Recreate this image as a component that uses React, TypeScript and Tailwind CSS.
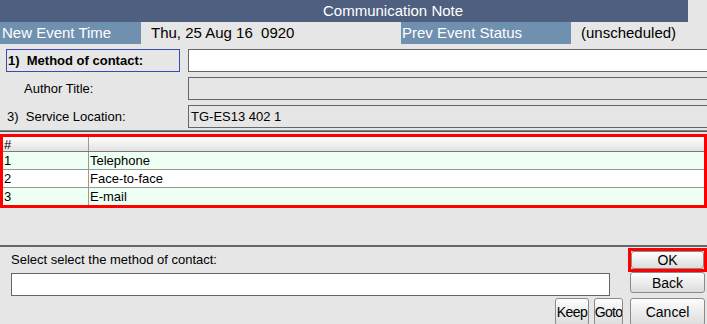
const rows = [
  { n: '1', label: 'Telephone' },
  { n: '2', label: 'Face-to-face' },
  { n: '3', label: 'E-mail' },
];

function Btn({ label, className = '' }: { label: string; className?: string }) {
  return (
    <button
      className={`flex items-center justify-center overflow-hidden rounded-[3px] border border-[#8a8a8a] bg-gradient-to-b from-[#fdfdfd] to-[#dcdcdc] px-0 leading-none whitespace-nowrap text-black ${className}`}
    >
      {label}
    </button>
  );
}

export default function App() {
  return (
    <div className="flex h-[324px] w-[707px] flex-col overflow-hidden bg-[#e6e6e6] font-['Liberation_Sans',Arial,sans-serif] text-black">
      {/* title */}
      <div className="flex h-[22px] shrink-0">
        <div className="flex w-[688px] items-center bg-[#4f5f80] pl-[323px] text-[15px] text-white">
          Communication Note
        </div>
      </div>

      {/* event info */}
      <div className="flex h-[22px] shrink-0 items-center text-[15px] whitespace-pre">
        <div className="flex h-full w-[141px] items-center bg-[#7090b0] pl-[2px] text-white">New Event Time</div>
        <div className="w-[260px] pl-[10px]">Thu, 25 Aug 16  0920</div>
        <div className="flex h-full w-[170px] items-center bg-[#7090b0] pl-[1px] text-white">Prev Event Status</div>
        <div className="pl-[10px]">(unscheduled)</div>
      </div>

      {/* form */}
      <div className="flex shrink-0 flex-col gap-[5px] pt-[5px] text-[13px]">
        <div className="flex h-[23px]">
          <div className="ml-[6px] flex w-[174px] items-center border border-[#3a4ab0] pl-[1px] font-bold whitespace-pre">
            1)  Method of contact:
          </div>
          <div className="ml-[8px] flex-1 border border-r-0 border-[#666] bg-white" />
        </div>
        <div className="flex h-[23px]">
          <div className="flex w-[188px] items-center pl-[24px]">Author Title:</div>
          <div className="flex-1 border border-r-0 border-[#666] bg-[#e6e6e6]" />
        </div>
        <div className="flex h-[23px]">
          <div className="flex w-[188px] items-center pl-[7px] whitespace-pre">3)  Service Location:</div>
          <div className="flex flex-1 items-center border border-r-0 border-[#666] bg-[#e6e6e6] pl-[2px]">
            TG-ES13 402 1
          </div>
        </div>
      </div>

      <div className="mt-[2px] h-[2px] shrink-0 border-t border-[#888] border-b border-b-[#555]" />

      {/* list */}
      <div className="mt-[2px] shrink-0 border-[3px] border-[#ff0000] text-[13px]">
        <div className="flex h-[15px] border-b border-[#7a7a7a] bg-gradient-to-b from-[#ffffff] to-[#e2e2e2] leading-[15px]">
          <div className="w-[86px] border-r border-[#999] pl-[1px]">#</div>
          <div className="flex-1" />
        </div>
        {rows.map((r, i) => (
          <div
            key={r.n}
            className={`flex items-center ${i < rows.length - 1 ? 'h-[18px] border-b border-[#999]' : 'h-[17px]'} ${
              i % 2 === 0 ? 'bg-[#eefff3]' : 'bg-white'
            }`}
          >
            <div className="flex h-full w-[86px] items-center border-r border-[#999] pl-[1px]">{r.n}</div>
            <div className="pl-[1px]">{r.label}</div>
          </div>
        ))}
      </div>

      <div className="mt-[37px] shrink-0 border-t-2 border-[#666]" />

      {/* bottom */}
      <div className="flex flex-1 flex-col text-[13px]">
        <div className="flex">
          <div className="flex flex-1 flex-col pl-[11px] pt-[5px]">
            <div className="leading-[15px]">Select select the method of contact:</div>
            <div className="mt-[6px] h-[23px] w-[599px] border border-[#666] bg-white" />
          </div>
          <div className="flex w-[79px] flex-col pt-[1px]">
            <div className="border-[3px] border-[#ff0000]">
              <Btn label="OK" className="h-[18px] w-full text-[14px]" />
            </div>
            <Btn label="Back" className="ml-[2px] h-[21px] w-[75px] text-[14px]" />
          </div>
        </div>
        <div className="mt-[2px] flex justify-end pr-[2px]">
          <Btn label="Keep" className="h-[28px] w-[34px] text-[14px] tracking-[-0.6px]" />
          <Btn label="Goto" className="ml-[5px] h-[28px] w-[29px] text-[14px] tracking-[-0.7px]" />
          <Btn label="Cancel" className="ml-[7px] h-[28px] w-[75px] text-[14px]" />
        </div>
      </div>
    </div>
  );
}
